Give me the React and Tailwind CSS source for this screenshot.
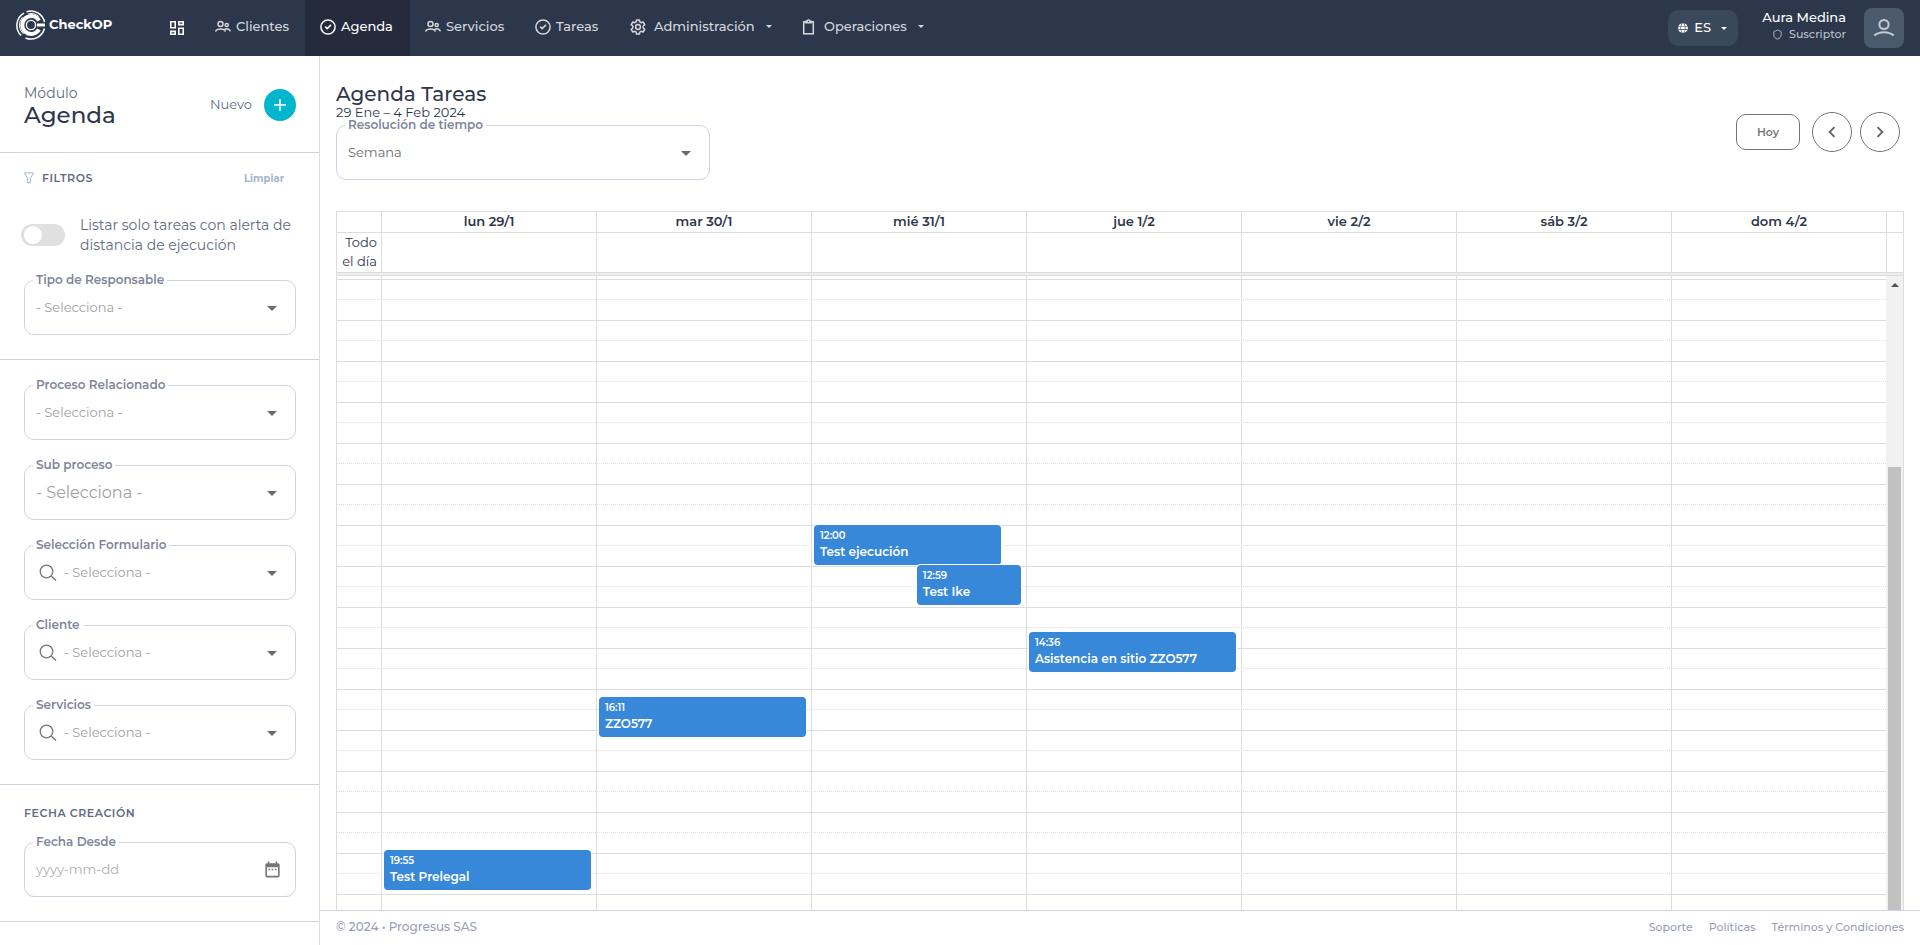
import { MdArrowDropDown, MdDateRange, MdChevronLeft, MdChevronRight } from "react-icons/md";
import { FaGlobe } from "react-icons/fa";
import { Shield } from "lucide-react";

const HOUR_HEIGHT = 41;
const FIRST_HOUR = 6;
const TOP_GAP = 3;

const hours = Array.from({ length: 18 }, (_, i) => FIRST_HOUR + i);

const days = [
  { label: "lun 29/1", events: [{ time: "19:55", title: "Test Prelegal", span: "left-[2px] right-[5px]" }] },
  { label: "mar 30/1", events: [{ time: "16:11", title: "ZZO577", span: "left-[2px] right-[5px]" }] },
  {
    label: "mié 31/1",
    events: [
      { time: "12:00", title: "Test ejecución", span: "left-[2px] right-[25px]" },
      { time: "12:59", title: "Test Ike", span: "left-[49%] right-[5px]" },
    ],
  },
  { label: "jue 1/2", events: [{ time: "14:36", title: "Asistencia en sitio ZZO577", span: "left-[2px] right-[5px]" }] },
  { label: "vie 2/2", events: [] },
  { label: "sáb 3/2", events: [] },
  { label: "dom 4/2", events: [] },
];

function eventTop(time) {
  const [h, m] = time.split(":").map(Number);
  return Math.round(TOP_GAP + (h - FIRST_HOUR + m / 60) * HOUR_HEIGHT);
}

function Logo() {
  return (
    <svg width="30" height="30" viewBox="0 0 30 30" fill="none" stroke="#fff" aria-hidden="true">
      <circle cx="15" cy="15" r="4.6" strokeWidth="1.4" />
      <path d="M23 10.4A9 9 0 1 0 23 19.6" strokeWidth="4" />
      <path d="M21 15h8" strokeWidth="3" />
      <path d="M10.5 1.7A14 14 0 0 1 28.6 12" strokeWidth="1.5" />
      <path d="M12 4A11.6 11.6 0 0 1 23 6.6" strokeWidth="1" />
      <path d="M8 3.2A14 14 0 0 0 5.2 25.5" strokeWidth="1.5" />
      <path d="M6.4 7.2A11.6 11.6 0 0 0 7.6 24" strokeWidth="1" />
      <path d="M28.4 18.5A14 14 0 0 1 9.5 28" strokeWidth="1.5" />
    </svg>
  );
}

function DashboardIcon() {
  return (
    <svg width="14" height="14" viewBox="0 0 14 14" fill="none" stroke="currentColor" strokeWidth="1.6" aria-hidden="true">
      <path d="M.8.8h4.4v6H.8zM8.8.8h4.4v2.8H8.8zM8.8 7.2h4.4v6H8.8zM.8 10.4h4.4v2.8H.8z" />
    </svg>
  );
}

function PeopleIcon() {
  return (
    <svg width="16" height="16" viewBox="0 0 16 16" fill="none" stroke="currentColor" strokeWidth="1.5" aria-hidden="true">
      <circle cx="5.5" cy="5" r="2.5" />
      <circle cx="11.7" cy="6" r="1.6" />
      <path d="M.6 12.6c.9-3.4 8.9-3.4 9.8 0M9.8 10.4c1.6-1.2 4.8-.7 5.6 2" />
    </svg>
  );
}

function CheckIcon() {
  return (
    <svg width="16" height="16" viewBox="0 0 16 16" fill="none" stroke="currentColor" strokeWidth="1.5" aria-hidden="true">
      <circle cx="8" cy="8" r="7.1" />
      <path d="m5.2 7.6 2 2 3.8-3.7" />
    </svg>
  );
}

function GearIcon() {
  return (
    <svg width="16" height="16" viewBox="0 0 16 16" fill="none" stroke="currentColor" strokeWidth="1.5" strokeLinejoin="round" aria-hidden="true">
      <circle cx="8" cy="8" r="2.4" />
      <path d="M6.6.9h2.8l.4 2 1.3.8 2-.7 1.7 2.7-1.6 1.3v2l1.6 1.3-1.7 2.7-2-.7-1.3.8-.4 2H6.6l-.4-2-1.3-.8-2 .7-1.7-2.7L2.8 9V7L1.2 5.7 2.9 3l2 .7 1.3-.8z" />
    </svg>
  );
}

function ClipboardIcon() {
  return (
    <svg width="14" height="16" viewBox="0 0 14 16" fill="none" stroke="currentColor" strokeWidth="1.5" aria-hidden="true">
      <path d="M3.5 2.7H1.7v12.1h9.6V2.7H9.5" />
      <path d="M3.8 3.8V2.2h1.3C5.3.5 7.7.5 7.9 2.2h1.3v1.6z" />
    </svg>
  );
}

function FilterIcon() {
  return (
    <svg width="10" height="12" viewBox="0 0 10 12" fill="none" stroke="#a3b8d0" aria-hidden="true">
      <path d="M.6.9h8.8v1L6.4 6v4.3L3.7 11V6L.6 1.9z" />
    </svg>
  );
}

function SearchIcon() {
  return (
    <svg className="ml-[3px] mr-[7px] shrink-0" width="18" height="18" viewBox="0 0 18 18" fill="none" stroke="#757575" strokeWidth="1.3" aria-hidden="true">
      <circle cx="7.5" cy="7.5" r="6.3" />
      <path d="m12 12 5 4.5" />
    </svg>
  );
}

function UserIcon() {
  return (
    <svg width="22" height="20" viewBox="0 0 22 20" fill="none" stroke="#c3cad3" strokeWidth="2" aria-hidden="true">
      <circle cx="11" cy="6.5" r="4.6" />
      <path d="M1.2 17.5c5.2-4.4 14.4-4.4 19.6 0" />
    </svg>
  );
}

const navItems = [
  { label: "Clientes", icon: <PeopleIcon />, width: "w-[105px]" },
  { label: "Agenda", icon: <CheckIcon />, width: "w-[105px]", active: true },
  { label: "Servicios", icon: <PeopleIcon />, width: "w-[110px]" },
  { label: "Tareas", icon: <CheckIcon />, width: "w-[95px]" },
  { label: "Administración", icon: <GearIcon />, width: "w-[172px]", menu: true },
  { label: "Operaciones", icon: <ClipboardIcon />, width: "w-[152px]", menu: true },
];

function Caret() {
  return <span className="border-x-[3px] border-t-[3px] border-x-transparent border-t-current" />;
}

function NavItem({ item }) {
  const base = `flex h-full items-center pb-[3px] pl-[15px] text-[13px] font-medium ${item.width}`;
  if (item.menu) {
    return (
      <button type="button" className={`${base} text-[#d5d7db]`}>
        {item.icon}
        <span className="ml-[8px] mr-[11px]">{item.label}</span>
        <Caret />
      </button>
    );
  }
  return (
    <a
      href="#"
      className={`${base} gap-[5px] ${item.active ? "bg-[#252a3c] text-white" : "text-[#d5d7db]"}`}
    >
      {item.icon}
      {item.label}
    </a>
  );
}

function Header() {
  return (
    <header className="flex h-14 shrink-0 items-center bg-[#2d374b] pr-4 text-white">
      <a href="#" className="flex w-[170px] items-center gap-[3px] pb-[6px] pl-4 text-[13px] font-bold">
        <Logo />
        CheckOP
      </a>
      <a href="#" aria-label="Panel" className="w-[30px]">
        <DashboardIcon />
      </a>
      <nav className="flex h-full">
        {navItems.map((item) => (
          <NavItem key={item.label} item={item} />
        ))}
      </nav>
      <div className="ml-auto flex items-center">
        <button type="button" className="flex h-9 w-[70px] items-center rounded-[10px] bg-[#3a485c] pl-[10px] text-[13px] font-medium">
          <FaGlobe size={10} />
          <span className="ml-[6px] mr-[10px]">ES</span>
          <Caret />
        </button>
        <div className="ml-6 mr-[18px] flex flex-col items-end pb-[6px]">
          <span className="text-[13px] leading-[18px] font-medium">Aura Medina</span>
          <span className="flex items-center gap-[6px] text-[11px] leading-[17px] font-medium text-[#b9bfc9]">
            <Shield size={11} />
            Suscriptor
          </span>
        </div>
        <button type="button" aria-label="Perfil" className="flex size-10 items-center justify-center rounded-[8px] bg-[#4a5a6c]">
          <UserIcon />
        </button>
      </div>
    </header>
  );
}

function Field({ id, label, children }) {
  return (
    <fieldset className="min-w-0 rounded-[10px] border border-[#d0d2e2] px-2 pb-[3px]">
      <legend className="px-[3px] text-[12px] leading-[14px] font-semibold text-[#7f869b]">
        <label htmlFor={id}>{label}</label>
      </legend>
      <div className="flex h-11 items-center pb-[3px] pl-[3px]">{children}</div>
    </fieldset>
  );
}

function SelectField({ id, label, value = "- Selecciona -", search, large, filled }) {
  return (
    <Field id={id} label={label}>
      {search && <SearchIcon />}
      <select
        id={id}
        className={`min-w-0 flex-1 appearance-none bg-transparent outline-none ${large ? "text-[16px]" : "text-[13px]"} ${
          filled ? "text-[#6b6b6b]" : "text-[#a0a0a0]"
        }`}
      >
        <option>{value}</option>
      </select>
      <MdArrowDropDown size={24} className="mr-[3px] shrink-0 text-[#6b6b6b]" />
    </Field>
  );
}

function Sidebar() {
  return (
    <aside className="flex w-80 shrink-0 flex-col overflow-hidden border-r border-[#dcdde6]">
      <div className="flex h-[97px] shrink-0 items-center justify-between border-b border-[#d0d2e2] pl-6 pr-[23px] pt-[2px]">
        <div>
          <p className="text-[14px] leading-[20px] text-[#5f6c80]">Módulo</p>
          <h1 className="text-[23px] leading-6 font-medium text-[#2d374b]">Agenda</h1>
        </div>
        <div className="flex items-center gap-3">
          <span className="text-[13px] text-[#5f6c80]">Nuevo</span>
          <button type="button" aria-label="Nuevo" className="flex size-8 items-center justify-center rounded-full bg-[#00b5cc]">
            <svg width="12" height="12" viewBox="0 0 12 12" stroke="#fff" strokeWidth="1.5" aria-hidden="true">
              <path d="M6 0v12M0 6h12" />
            </svg>
          </button>
        </div>
      </div>

      <section className="shrink-0 border-b border-[#d0d2e2] pb-6 pl-6 pr-[23px] pt-[15px]">
        <div className="flex h-5 items-center">
          <FilterIcon />
          <h2 className="ml-2 text-[11px] font-semibold tracking-wider text-[#5f6c80]">FILTROS</h2>
          <button type="button" className="ml-auto mr-3 text-[10px] font-bold text-[#a3b8d0]">
            Limpiar
          </button>
        </div>
        <div className="-ml-[3px] mt-[27px] flex items-center">
          <label htmlFor="alerta" className="relative h-[22px] w-11 shrink-0 rounded-full bg-[#e0e0e0]">
            <input id="alerta" type="checkbox" role="switch" className="peer absolute inset-0 m-0 size-full appearance-none rounded-full checked:bg-[#00b5cc]" />
            <span className="absolute left-[3px] top-[2px] size-[18px] rounded-full bg-white peer-checked:left-[23px]" />
          </label>
          <label htmlFor="alerta" className="ml-[15px] text-[14px] leading-5 text-[#5f6c80]">
            Listar solo tareas con alerta de distancia de ejecución
          </label>
        </div>
        <div className="mt-[18px]">
          <SelectField id="tipo" label="Tipo de Responsable" />
        </div>
      </section>

      <section className="flex shrink-0 flex-col gap-[18px] border-b border-[#d0d2e2] pb-6 pl-6 pr-[23px] pt-[18px]">
        <SelectField id="proceso" label="Proceso Relacionado" />
        <SelectField id="subproceso" label="Sub proceso" large />
        <SelectField id="formulario" label="Selección Formulario" search />
        <SelectField id="cliente" label="Cliente" search />
        <SelectField id="servicios" label="Servicios" search />
      </section>

      <section className="shrink-0 border-b border-[#d0d2e2] pb-6 pl-6 pr-[23px] pt-[18px]">
        <h2 className="mb-3 text-[11px] leading-5 font-semibold tracking-wider text-[#5f6c80]">FECHA CREACIÓN</h2>
        <Field id="desde" label="Fecha Desde">
          <input
            id="desde"
            type="text"
            placeholder="yyyy-mm-dd"
            className="min-w-0 flex-1 text-[13px] outline-none placeholder:text-[#b0b0b0]"
          />
          <MdDateRange size={19} className="mr-[5px] shrink-0 text-[#757575]" />
        </Field>
      </section>
    </aside>
  );
}

function CalendarHead() {
  return (
    <table className="w-full shrink-0 table-fixed border-separate border-spacing-0">
      <colgroup>
        <col className="w-11" />
        {days.map((day) => (
          <col key={day.label} />
        ))}
        <col className="w-[17px]" />
      </colgroup>
      <thead>
        <tr className="h-[21px]">
          <td className="border-b border-[#ddd]" />
          {days.map((day) => (
            <th key={day.label} scope="col" className="border-b border-l border-[#ddd] p-0 pb-[2px] text-[13px] leading-[18px] font-semibold">
              {day.label}
            </th>
          ))}
          <td className="border-b border-l border-[#ddd]" />
        </tr>
      </thead>
      <tbody>
        <tr className="h-[39px]">
          <th scope="row" className="p-0 pb-px pr-1 text-right text-[13px] leading-[19px] font-normal">
            Todo el día
          </th>
          {days.map((day) => (
            <td key={day.label} className="border-l border-[#ddd]" />
          ))}
          <td className="border-l border-[#ddd]" />
        </tr>
      </tbody>
    </table>
  );
}

function CalendarEvent({ event }) {
  return (
    <a
      href="#"
      className={`absolute h-10 overflow-hidden rounded-[3px] bg-[#3788d8] px-[6px] pt-[3px] text-white outline outline-white ${event.span}`}
      style={{ top: eventTop(event.time) }}
    >
      <span className="block text-[10px] leading-4 font-semibold">{event.time}</span>
      <span className="block text-[12px] leading-[15px] font-semibold">{event.title}</span>
    </a>
  );
}

function CalendarBody() {
  return (
    <div className="flex min-h-0 flex-1 overflow-hidden">
      <div className="relative min-w-0 flex-1">
        <div className="pt-[3px]">
          {hours.map((hour) => (
            <div key={hour} className="h-[41px] border-t border-[#ddd]">
              <div className="h-5 border-b border-dotted border-[#ddd]" />
            </div>
          ))}
        </div>
        <div className="absolute inset-0 grid grid-cols-[44px_repeat(7,minmax(0,1fr))]">
          <div />
          {days.map((day) => (
            <div key={day.label} className="relative border-l border-[#ddd]">
              {day.events.map((event) => (
                <CalendarEvent key={event.time} event={event} />
              ))}
            </div>
          ))}
        </div>
      </div>
      <div className="flex w-[17px] flex-col items-center bg-[#f1f1f1] pt-[7px]">
        <span className="border-x-4 border-b-4 border-x-transparent border-b-[#505050]" />
        <div className="mt-[180px] w-[13px] flex-1 bg-[#c1c1c1]" />
      </div>
    </div>
  );
}

function Calendar() {
  return (
    <div className="mt-[31px] flex min-h-0 flex-1 flex-col overflow-hidden border border-b-0 border-[#ddd] text-[#2d374b]">
      <CalendarHead />
      <div className="h-1 shrink-0 border-y border-[#ddd] bg-[#eee]" />
      <CalendarBody />
    </div>
  );
}

export default function App() {
  return (
    <div className="flex h-screen flex-col overflow-hidden bg-white font-['Montserrat','Inter',sans-serif] text-[#2d374b]">
      <Header />
      <div className="flex min-h-0 flex-1">
        <Sidebar />
        <div className="flex min-w-0 flex-1 flex-col">
          <main className="flex min-h-0 flex-1 flex-col px-4 pt-[26px]">
            <div className="flex items-start justify-between">
              <div className="w-[374px]">
                <h2 className="text-[20px] leading-[25px] font-medium">Agenda Tareas</h2>
                <p className="text-[13px] leading-[11px]">29 Ene – 4 Feb 2024</p>
                <SelectField id="resolucion" label="Resolución de tiempo" value="Semana" filled />
              </div>
              <div className="mr-1 mt-[30px] flex items-center">
                <button type="button" className="mr-3 h-9 w-16 rounded-[10px] border border-[#757575] text-[11px] font-semibold text-[#757575]">
                  Hoy
                </button>
                <button type="button" aria-label="Anterior" className="mr-2 flex size-10 items-center justify-center rounded-full border border-[#757575] text-[#616161]">
                  <MdChevronLeft size={22} />
                </button>
                <button type="button" aria-label="Siguiente" className="flex size-10 items-center justify-center rounded-full border border-[#757575] text-[#616161]">
                  <MdChevronRight size={22} />
                </button>
              </div>
            </div>
            <Calendar />
          </main>
          <footer className="flex h-[35px] shrink-0 items-center justify-between border-t border-[#d0d2e2] px-4 pb-[2px] text-[#9aa0b8]">
            <p className="text-[12px] font-medium">© 2024 • Progresus SAS</p>
            <nav className="flex gap-4 text-[11px] font-medium">
              <a href="#">Soporte</a>
              <a href="#">Políticas</a>
              <a href="#">Términos y Condiciones</a>
            </nav>
          </footer>
        </div>
      </div>
    </div>
  );
}
